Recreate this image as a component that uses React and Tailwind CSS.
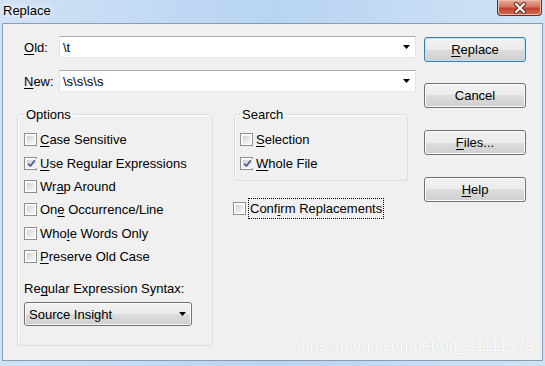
import React from "react";

const Acc = ({ children }) => <span className="underline underline-offset-2">{children}</span>;

const CheckBox = ({ checked }) => (
  <span className="w-[13px] h-[13px] shrink-0 border border-[#8e8f8f] bg-white p-[1px] flex">
    <span className="flex-1 bg-linear-to-br from-[#d2d2d2] to-[#f7f7f7] border border-[#f4f4f4] flex items-center justify-center">
      {checked && (
        <svg width="9" height="9" viewBox="0 0 9 9">
          <path d="M1.2 4.6 L3.4 7 L7.8 1.4" fill="none" stroke="#4a5d99" strokeWidth="1.7" />
        </svg>
      )}
    </span>
  </span>
);

const Check = ({ checked, children }) => (
  <div className="h-[23.4px] flex items-center gap-[3px]">
    <CheckBox checked={checked} />
    <span>{children}</span>
  </div>
);

const Arrow = () => (
  <svg width="7" height="4" viewBox="0 0 7 4" className="shrink-0">
    <path d="M0 0 H7 L3.5 4 Z" fill="#000" />
  </svg>
);

const Combo = ({ value }) => (
  <div className="w-[357px] h-[22px] bg-white border border-[#e2e3ea] border-t-[#abadb3] border-b-[#e3e9ef] flex items-center pl-[3px] pr-[5px]">
    <span className="flex-1">{value}</span>
    <Arrow />
  </div>
);

const Button = ({ children, primary }) => (
  <div
    className={`w-[102px] h-[25px] rounded-[3px] border flex items-center justify-center bg-[linear-gradient(to_bottom,#f2f2f2_0%,#ebebeb_50%,#dddddd_50%,#cfcfcf_100%)] ${
      primary ? "border-[#3c7fb1] shadow-[inset_0_0_0_1px_#b6e3f8]" : "border-[#707070] shadow-[inset_0_0_0_1px_#fcfcfc]"
    }`}
  >
    {children}
  </div>
);

export default function App() {
  return (
    <div
      className="relative w-[545px] h-[366px] flex flex-col bg-linear-to-r from-[#cfe2f6] via-[#b8d4f1] to-[#d0e3f6] text-[13px] leading-[15px] text-black"
      style={{ fontFamily: '"Liberation Sans", Arial, sans-serif' }}
    >
      {/* title bar */}
      <div className="h-[23px] flex items-start justify-between">
        <span className="ml-[3px] mt-[3px] text-[13px] [text-shadow:0_0_6px_#fff,0_0_8px_#fff]">Replace</span>
        <div className="mr-[3px] w-[45px] h-[16px] rounded-b-[4px] border border-t-0 border-[#6b2c22] bg-[linear-gradient(to_bottom,#e9a99a_0%,#d47560_45%,#c0432c_55%,#d36e56_100%)] shadow-[inset_0_0_0_1px_#eebbaf] flex items-center justify-center">
          <svg width="14" height="12" viewBox="0 0 14 12">
            <path d="M3 2 L11 10 M11 2 L3 10" stroke="#5a2a22" strokeWidth="4" strokeLinecap="round" />
            <path d="M3 2 L11 10 M11 2 L3 10" stroke="#fff" strokeWidth="2.2" strokeLinecap="round" />
          </svg>
        </div>
      </div>

      {/* client area */}
      <div className="mx-[2px] h-[338px] border border-[#8b9db3] bg-[#f0f0f0] flex">
        <div className="w-[418px] pl-[14px]">
          <div className="mt-[12px] pl-[7px] flex items-center">
            <span className="w-[35px]"><Acc>O</Acc>ld:</span>
            <Combo value="\t" />
          </div>
          <div className="mt-[12px] pl-[7px] flex items-center">
            <span className="w-[35px]"><Acc>N</Acc>ew:</span>
            <Combo value="\s\s\s\s" />
          </div>

          <div className="mt-[15px] flex items-start">
            <fieldset className="w-[196px] border border-[#d5dfe5] rounded-[3px] pl-[6px] pt-[6px] pb-[19px] shadow-[inset_1px_1px_0_#fff]">
              <legend className="px-[2px]">Options</legend>
              <Check><Acc>C</Acc>ase Sensitive</Check>
              <Check checked><Acc>U</Acc>se Regular Expressions</Check>
              <Check>Wr<Acc>a</Acc>p Around</Check>
              <Check>On<Acc>e</Acc> Occurrence/Line</Check>
              <Check>Who<Acc>l</Acc>e Words Only</Check>
              <Check><Acc>P</Acc>reserve Old Case</Check>
              <div className="mt-[13px] h-[15px]">Re<Acc>g</Acc>ular Expression Syntax:</div>
              <div className="mt-[6px] w-[168px] h-[24px] rounded-[3px] border border-[#707070] bg-[linear-gradient(to_bottom,#f2f2f2_0%,#ebebeb_50%,#dddddd_50%,#cfcfcf_100%)] shadow-[inset_0_0_0_1px_#fcfcfc] flex items-center pl-[4px] pr-[5px]">
                <span className="flex-1">Source Insight</span>
                <Arrow />
              </div>
            </fieldset>

            <div className="ml-[21px] flex flex-col">
              <fieldset className="w-[174px] border border-[#d5dfe5] rounded-[3px] pl-[5px] pt-[6px] pb-[5px] shadow-[inset_1px_1px_0_#fff]">
                <legend className="px-[2px]">Search</legend>
                <Check><Acc>S</Acc>election</Check>
                <Check checked><Acc>W</Acc>hole File</Check>
              </fieldset>
              <div className="mt-[17px] -ml-[1px] flex items-center gap-[2px]">
                <CheckBox />
                <span className="px-[1px] py-[2px] border border-dotted border-black">
                  Conf<Acc>i</Acc>rm Replacements
                </span>
              </div>
            </div>
          </div>
        </div>

        <div className="ml-[3px] pt-[13px] flex flex-col">
          <Button primary><Acc>R</Acc>eplace</Button>
          <div className="mt-[21px]"><Button>Cancel</Button></div>
          <div className="mt-[22px]"><Button><Acc>F</Acc>iles...</Button></div>
          <div className="mt-[22px]"><Button><Acc>H</Acc>elp</Button></div>
        </div>
      </div>

      {/* watermark */}
      <div className="absolute left-[292px] top-[337px] text-[16px] leading-[18px] text-white [text-shadow:0_0_1px_#c4c4c4]">
        https://blog.csdn.net/qq_21111579
      </div>
    </div>
  );
}
